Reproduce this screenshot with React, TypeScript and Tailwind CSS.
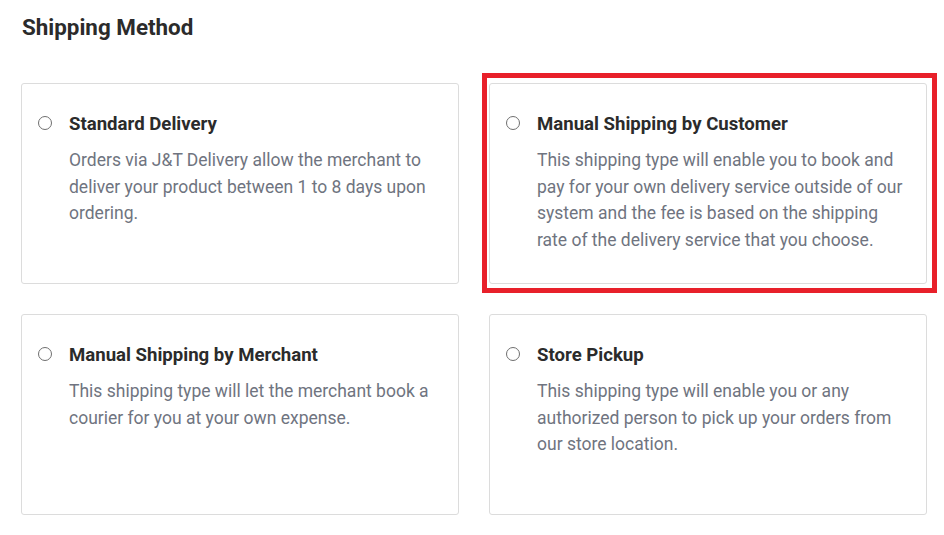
const methods = [
  {
    title: "Standard Delivery",
    desc: "Orders via J&T Delivery allow the merchant to deliver your product between 1 to 8 days upon ordering.",
  },
  {
    title: "Manual Shipping by Customer",
    desc: "This shipping type will enable you to book and pay for your own delivery service outside of our system and the fee is based on the shipping rate of the delivery service that you choose.",
    highlight: true,
  },
  {
    title: "Manual Shipping by Merchant",
    desc: "This shipping type will let the merchant book a courier for you at your own expense.",
  },
  {
    title: "Store Pickup",
    desc: "This shipping type will enable you or any authorized person to pick up your orders from our store location.",
  },
];

export default function App() {
  return (
    <div className="w-[944px] h-[535px] bg-white font-['Roboto',sans-serif] overflow-hidden">
      <div className="pl-[21px] pr-[17px] pt-[13px]">
        <h2 className="text-[22.4px] leading-[28px] font-bold text-[#2b2b2b] pl-[1px]">Shipping Method</h2>
        <div className="grid grid-cols-[438px_438px] gap-x-[30px] gap-y-[30px] mt-[42px]">
          {methods.map((m) => (
            <div key={m.title} className="relative">
              <label className="flex gap-[17px] h-[201px] border border-[#dcdcdc] rounded-[3px] bg-white pl-[16px] pr-[20px] pt-[28px] cursor-pointer">
                <span className="mt-[4px] w-[14px] h-[14px] shrink-0 rounded-full border border-[#6f6f6f] bg-white" />
                <div>
                  <div className="text-[18.6px] leading-[24px] font-bold text-[#2b2b2b]">{m.title}</div>
                  <p className="mt-[11px] text-[17.5px] leading-[26.5px] text-[#6f7480]">{m.desc}</p>
                </div>
              </label>
              {m.highlight && (
                <div className="absolute -left-[7px] -top-[10px] -right-[10px] -bottom-[9px] border-[5px] border-[#e8202a] pointer-events-none" />
              )}
            </div>
          ))}
        </div>
      </div>
    </div>
  );
}
